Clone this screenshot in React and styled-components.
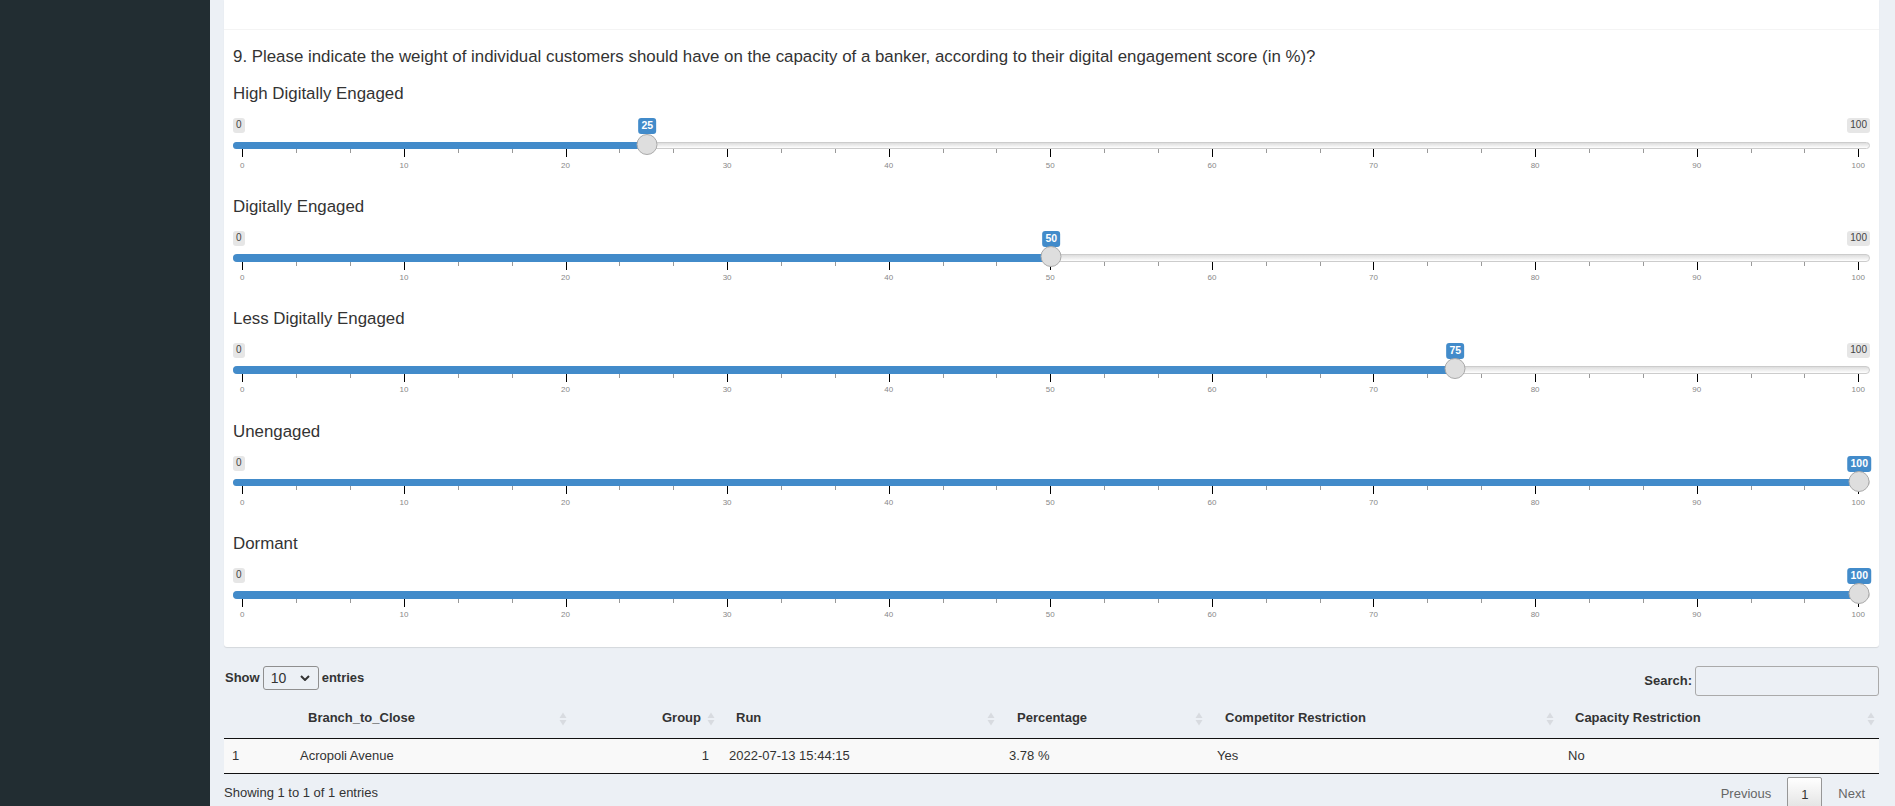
import React from "react";
import styled, { createGlobalStyle } from "styled-components";

const Global = createGlobalStyle`
  html, body { margin: 0; padding: 0; height: 806px; overflow: hidden; background: #ecf0f5; }
  body { font-family: "Liberation Sans", Arial, sans-serif; color: #333; }
  * { box-sizing: border-box; }
`;

const Page = styled.div`
  display: flex;
  width: 1895px;
  height: 806px;
  overflow: hidden;
`;
const Sidebar = styled.aside`
  flex: 0 0 210px;
  background: #222d32;
`;
const Main = styled.main`
  flex: 1;
  min-width: 0;
  padding: 0 16px 0 14px;
  background: #ecf0f5;
`;
const Card = styled.section`
  height: 647px;
  background: #fff;
  border-radius: 0 0 3px 3px;
  box-shadow: 0 1px 1px rgba(0, 0, 0, 0.1);
`;
const TopStrip = styled.div`
  height: 30px;
  border-bottom: 1px solid #f4f4f4;
`;
const Body = styled.div`
  padding: 17px 9px 0;
`;
const Question = styled.p`
  margin: 0 0 17px;
  font-size: 16.87px;
  line-height: 20px;
`;
const SliderRow = styled.div`
  height: 112.6px;
`;
const SliderLabel = styled.div`
  font-size: 16.87px;
  line-height: 20px;
  margin-bottom: 14px;
`;
const Slider = styled.div`
  --track-top: ${(p) => p.$top}px;
  --track-h: ${(p) => p.$h}px;
  position: relative;
  height: 56px;
`;
const Chip = styled.span`
  position: absolute;
  top: 0;
  height: 15px;
  padding: 0 3px;
  font-size: 10px;
  line-height: 13px;
  border-radius: 3px;
  background: #e6e6e6;
  color: #444;
  ${(p) => (p.$side === "left" ? "left: 0;" : "right: 0;")}
`;
const ValueChip = styled.span`
  position: absolute;
  top: 0;
  height: 16px;
  padding: 0 3px;
  transform: translateX(-50%);
  font-size: 10.5px;
  font-weight: 700;
  line-height: 15px;
  border-radius: 3px;
  background: #428bca;
  color: #fff;
  white-space: nowrap;
`;
const Track = styled.div`
  position: absolute;
  top: var(--track-top);
  left: 0;
  right: 0;
  height: var(--track-h);
  border: 1px solid #cccccc;
  border-radius: 4px;
  background: linear-gradient(#dddddd, #f4f4f4 70%, #ffffff);
`;
const Bar = styled.div`
  position: absolute;
  top: var(--track-top);
  left: 0;
  height: var(--track-h);
  border-radius: 4px 0 0 4px;
  background: #428bca;
`;
const Handle = styled.div`
  position: absolute;
  top: calc(var(--track-top) - 8px);
  width: 21px;
  height: 21px;
  transform: translateX(-50%);
  border: 1px solid #aaaaaa;
  border-radius: 50%;
  background: #dedede;
`;
const Tick = styled.i`
  position: absolute;
  top: calc(var(--track-top) + var(--track-h));
  width: 1px;
  height: ${(p) => (p.$major ? "8px" : "4px")};
  background: ${(p) => (p.$major ? "#000" : "#999")};
`;
const TickText = styled.span`
  position: absolute;
  top: calc(var(--track-top) + 19px);
  transform: translateX(-50%);
  font-size: 8px;
  line-height: 10px;
  color: #888;
`;

const START = 9.3;
const SPAN = 1616;
const xOf = (v) => START + (v / 100) * SPAN;

const ticks = [];
for (let i = 0; i <= 30; i++) ticks.push(i);

function RangeSlider({ label, value, top, h }) {
  const x = xOf(value) + 1;
  return (
    <SliderRow>
      <SliderLabel>{label}</SliderLabel>
      <Slider $top={top} $h={h}>
        <Chip $side="left">0</Chip>
        {value < 100 && <Chip $side="right">100</Chip>}
        <ValueChip style={{ left: x }}>{value}</ValueChip>
        <Track />
        <Bar style={{ width: x }} />
        {ticks.map((i) => (
          <Tick key={i} $major={i % 3 === 0} style={{ left: Math.round(xOf((i * 10) / 3)) }} />
        ))}
        {ticks
          .filter((i) => i % 3 === 0)
          .map((i) => (
            <TickText key={i} style={{ left: xOf((i * 10) / 3) }}>
              {(i * 10) / 3}
            </TickText>
          ))}
        <Handle style={{ left: x }} />
      </Slider>
    </SliderRow>
  );
}

const Controls = styled.div`
  display: flex;
  justify-content: space-between;
  height: 49px;
  padding-top: 19px;
  font-size: 13px;
`;
const Length = styled.label`
  display: flex;
  align-items: flex-start;
  gap: 3px;
  padding-left: 1px;
  font-weight: 700;
  line-height: 24px;
`;
const chevron =
  "url(\"data:image/svg+xml,%3Csvg xmlns='http://www.w3.org/2000/svg' width='10' height='6'%3E%3Cpath d='M1 1l4 4 4-4' fill='none' stroke='%23333' stroke-width='2'/%3E%3C/svg%3E\")";
const Select = styled.select`
  appearance: none;
  width: 56px;
  height: 24px;
  padding: 0 0 0 7px;
  font: 400 14px "Liberation Sans", Arial, sans-serif;
  color: #333;
  background: #ecf0f5 ${chevron} no-repeat right 8px center;
  border: 1px solid #8f8f8f;
  border-radius: 3px;
`;
const SearchBox = styled.label`
  display: flex;
  align-items: flex-start;
  gap: 3px;
  font-weight: 700;
  line-height: 30px;
`;
const SearchInput = styled.input`
  width: 184px;
  height: 30px;
  background: transparent;
  border: 1px solid #aaaaaa;
  border-radius: 3px;
`;
const Table = styled.table`
  width: 1655px;
  table-layout: fixed;
  border-collapse: collapse;
  font-size: 13px;
`;
const Th = styled.th`
  position: relative;
  height: 42px;
  padding: 2px 18px 0 ${(p) => p.$pl || 18}px;
  font-size: 13px;
  font-weight: 700;
  text-align: ${(p) => (p.$right ? "right" : "left")};
  border-bottom: 1px solid #111;
`;
const Sort = styled.svg`
  position: absolute;
  right: 4px;
  top: 16px;
  width: 8px;
  height: 14px;
`;
const Td = styled.td`
  height: 35px;
  padding: 0 10px 0 ${(p) => p.$pl || 10}px;
  background: #f9f9f9;
  text-align: ${(p) => (p.$right ? "right" : "left")};
  border-bottom: 1px solid #111;
`;
const Footer = styled.div`
  display: flex;
  justify-content: space-between;
  font-size: 13px;
`;
const Info = styled.div`
  padding-top: 11px;
  line-height: 15px;
`;
const Pager = styled.div`
  display: flex;
  align-items: flex-start;
  padding: 3px 14px 0 0;
  color: #666;
  font-size: 13px;
  line-height: 34px;
`;
const PageLink = styled.span`
  padding: 0;
`;
const PageCurrent = styled.span`
  width: 35px;
  height: 40px;
  margin: 0 16px;
  text-align: center;
  color: #333;
  border: 1px solid #979797;
  border-radius: 2px;
  background: linear-gradient(#ffffff, #dcdcdc);
`;

const SortIcon = () => (
  <Sort viewBox="0 0 8 14" aria-hidden="true">
    <path d="M4 0.5 L7.5 6 H0.5 Z" fill="#d8dbe0" />
    <path d="M4 13.5 L7.5 8 H0.5 Z" fill="#d8dbe0" />
  </Sort>
);

const sliders = [
  { label: "High Digitally Engaged", value: 25, top: 24, h: 7 },
  { label: "Digitally Engaged", value: 50, top: 23.4, h: 8 },
  { label: "Less Digitally Engaged", value: 75, top: 22.8, h: 8 },
  { label: "Unengaged", value: 100, top: 23.2, h: 7 },
  { label: "Dormant", value: 100, top: 22.6, h: 8 },
];

const columns = [
  { w: 66, label: "" },
  { w: 281, label: "Branch_to_Close" },
  { w: 148, label: "Group", right: true },
  { w: 280, label: "Run", pl: 17 },
  { w: 208, label: "Percentage" },
  { w: 351, label: "Competitor Restriction" },
  { w: 321, label: "Capacity Restriction", pl: 17 },
];
const row = ["1", "Acropoli Avenue", "1", "2022-07-13 15:44:15", "3.78 %", "Yes", "No"];

export default function App() {
  return (
    <Page>
      <Global />
      <Sidebar />
      <Main>
        <Card>
          <TopStrip />
          <Body>
            <Question>
              9. Please indicate the weight of individual customers should have on the capacity of a banker, according to their digital engagement score (in %)?
            </Question>
            {sliders.map((s) => (
              <RangeSlider key={s.label} {...s} />
            ))}
          </Body>
        </Card>
        <Controls>
          <Length>
            Show
            <Select defaultValue="10">
              <option>10</option>
              <option>25</option>
              <option>50</option>
              <option>100</option>
            </Select>
            entries
          </Length>
          <SearchBox>
            Search:
            <SearchInput />
          </SearchBox>
        </Controls>
        <Table>
          <colgroup>
            {columns.map((c, i) => (
              <col key={i} style={{ width: c.w }} />
            ))}
          </colgroup>
          <thead>
            <tr>
              {columns.map((c, i) => (
                <Th key={i} $right={c.right} $pl={c.pl}>
                  {c.label}
                  {i > 0 && <SortIcon />}
                </Th>
              ))}
            </tr>
          </thead>
          <tbody>
            <tr>
              {row.map((t, i) => (
                <Td key={i} $right={columns[i].right} $pl={i === 0 ? 8 : undefined}>
                  {t}
                </Td>
              ))}
            </tr>
          </tbody>
        </Table>
        <Footer>
          <Info>Showing 1 to 1 of 1 entries</Info>
          <Pager>
            <PageLink>Previous</PageLink>
            <PageCurrent>1</PageCurrent>
            <PageLink>Next</PageLink>
          </Pager>
        </Footer>
      </Main>
    </Page>
  );
}
